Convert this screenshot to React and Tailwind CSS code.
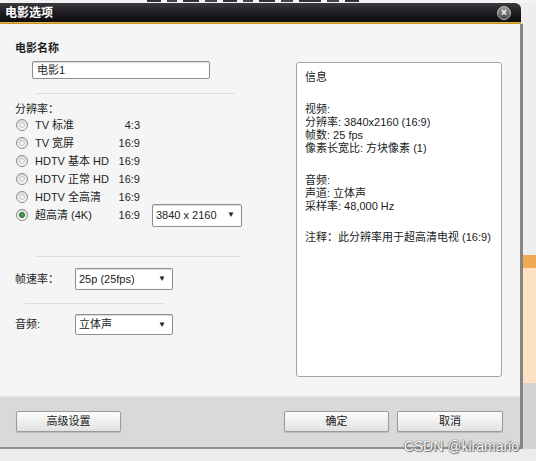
import React from "react";

function Radio({ checked }) {
  return (
    <div className="w-[12px] h-[12px] rounded-full border border-[#8a8a8a] bg-gradient-to-b from-[#dcdcdc] to-[#fafafa] flex items-center justify-center shrink-0">
      <div className={checked ? "w-[6px] h-[6px] rounded-full bg-[#3f9a4a] border border-[#2b6f33]" : "w-[6px] h-[6px] rounded-full bg-[#f0f0f0] border border-[#c8c8c8]"} />
    </div>
  );
}

function Select({ value, className }) {
  return (
    <div className={"flex items-center justify-between bg-white border border-[#8e8e8e] rounded-[2px] shadow-[inset_0_1px_1px_rgba(0,0,0,0.15)] pl-[3px] pr-[6px] text-[11px] text-[#222] " + className}>
      <span>{value}</span>
      <span className="text-[8px] leading-none">▼</span>
    </div>
  );
}

function Btn({ children, className }) {
  return (
    <div className={"h-[21px] flex items-center justify-center rounded-[2px] border border-[#9a9a9a] bg-gradient-to-b from-[#fdfdfd] to-[#e2e2e2] shadow-[0_1px_1px_rgba(0,0,0,0.15)] text-[11px] text-[#222] " + className}>
      {children}
    </div>
  );
}

const rows = [
  ["TV 标准", "4:3"],
  ["TV 宽屏", "16:9"],
  ["HDTV 基本 HD", "16:9"],
  ["HDTV 正常 HD", "16:9"],
  ["HDTV 全高清", "16:9"],
  ["超高清 (4K)", "16:9"],
];

const marks = [
  [147, 14], [166, 10], [182, 16], [204, 12], [222, 14], [243, 10], [258, 16], [281, 12], [300, 22], [328, 12], [346, 14],
];

export default function App() {
  return (
    <div className="relative w-[536px] h-[461px] overflow-hidden bg-[#ededed] flex flex-col [font-family:'Liberation_Sans','Noto_Sans_CJK_SC',sans-serif] text-[#1e1e1e]">
      {/* top clipped strip */}
      <div className="h-[3px] bg-[#f2f2f2] flex items-start shrink-0">
        <div className="flex gap-[6px] ml-[147px] blur-[0.5px]">
          <div className="w-[14px] h-[2px] bg-[#333]" />
          <div className="w-[10px] h-[2px] bg-[#444]" />
          <div className="w-[16px] h-[2px] bg-[#333]" />
          <div className="w-[12px] h-[2px] bg-[#444]" />
          <div className="w-[14px] h-[2px] bg-[#333]" />
          <div className="w-[10px] h-[2px] bg-[#444]" />
          <div className="w-[16px] h-[2px] bg-[#333]" />
          <div className="w-[12px] h-[2px] bg-[#444]" />
          <div className="w-[22px] h-[2px] bg-[#333]" />
          <div className="w-[12px] h-[2px] bg-[#444]" />
          <div className="w-[14px] h-[2px] bg-[#333]" />
        </div>
      </div>
      <div className="flex shrink-0">
        {/* dialog */}
        <div className="w-[523px] flex flex-col">
          <div className="h-[19px] rounded-tr-[6px] bg-gradient-to-b from-[#3a3a3e] via-[#1e1e22] to-[#0e0e10] flex items-center justify-between pl-[5px] pr-[10px] mr-[2px]">
            <span className="text-white text-[12px] font-bold">电影选项</span>
            <div className="w-[14px] h-[14px] rounded-full bg-gradient-to-b from-[#9a9a9a] to-[#4a4a4a] border border-[#bbbbbb] flex items-center justify-center text-white text-[10px] font-bold leading-none">×</div>
          </div>
          <div className="h-[2px] bg-gradient-to-b from-[#f4c24a] to-[#c8901c] mr-[2px]" />
          <div className="flex flex-col border-r-[3px] border-[#858585] shadow-[2px_0_2px_rgba(0,0,0,0.2)]">
            {/* body */}
            <div className="h-[371px] bg-[#f5f5f5] flex">
              <div className="w-[296px] flex flex-col pl-[15px] pt-[17px]">
                <div className="text-[11px] font-bold leading-[14px]">电影名称</div>
                <div className="ml-[17px] mt-[6px] w-[178px] h-[18px] bg-white border border-[#8e8e8e] rounded-[2px] shadow-[inset_0_1px_1px_rgba(0,0,0,0.15)] text-[11px] pl-[4px] flex items-center">电影1</div>
                <div className="ml-[20px] mt-[14px] w-[200px] h-px bg-[#dedede]" />
                <div className="mt-[9px] text-[11px] leading-[13px]">分辨率：</div>
                <div className="flex flex-col">
                  {rows.map(([name, ratio], i) => (
                    <div key={i} className="h-[18px] flex items-center">
                      <div className="ml-[1px]"><Radio checked={i === 5} /></div>
                      <span className="ml-[7px] w-[75px] text-[11px] whitespace-nowrap">{name}</span>
                      <span className="w-[30px] text-right text-[11px]">{ratio}</span>
                      {i === 5 && <Select value="3840 x 2160" className="ml-[12px] w-[90px] h-[23px] shrink-0" />}
                    </div>
                  ))}
                </div>
                <div className="ml-[20px] mt-[32px] w-[205px] h-px bg-[#dedede]" />
                <div className="mt-[11px] h-[22px] flex items-center">
                  <span className="w-[60px] text-[11px]">帧速率：</span>
                  <Select value="25p (25fps)" className="w-[98px] h-[22px]" />
                </div>
                <div className="ml-[10px] mt-[13px] w-[140px] h-px bg-[#dedede]" />
                <div className="mt-[10px] h-[21px] flex items-center">
                  <span className="w-[60px] text-[11px]">音频:</span>
                  <Select value="立体声" className="w-[98px] h-[21px]" />
                </div>
              </div>
              <div className="mt-[38px] w-[206px] h-[315px] bg-white border border-[#a3a3a3] rounded-[3px] pl-[8px] pt-[8px] text-[11px] leading-[13px] text-[#222]">
                <div>信息</div>
                <div className="h-[19px]" />
                <div>视频:</div>
                <div>分辨率: 3840x2160 (16:9)</div>
                <div>帧数: 25 fps</div>
                <div>像素长宽比: 方块像素 (1)</div>
                <div className="h-[19px]" />
                <div>音频:</div>
                <div>声道: 立体声</div>
                <div>采样率: 48,000 Hz</div>
                <div className="h-[18px]" />
                <div>注释：此分辨率用于超高清电视 (16:9)</div>
              </div>
            </div>
            {/* footer */}
            <div className="h-[52px] bg-[#d9d9d9] border-t-2 border-[#ebebeb] flex items-start pt-[14px] pl-[16px] pr-[17px]">
              <Btn className="w-[105px]">高级设置</Btn>
              <div className="flex-1" />
              <Btn className="w-[105px]">确定</Btn>
              <Btn className="w-[106px] ml-[8px]">取消</Btn>
            </div>
          </div>
          <div className="h-[2px] bg-[#8f8f8f]" />
        </div>
        {/* background right of dialog */}
        <div className="flex-1 flex flex-col">
          <div className="h-[252px] bg-[#eeeeee]" />
          <div className="h-[13px] bg-[#f0aa55]" />
          <div className="h-[115px] bg-[#fde2c4]" />
          <div className="h-[66px] bg-[#d4d4d4]" />
        </div>
      </div>
      <div className="flex-1 bg-[#ececec]" />
      <div className="absolute right-[17px] top-[437px] text-[14px] leading-[18px] text-white [text-shadow:0_0_1px_#555,0_0_1px_#555,1px_1px_1px_#777] whitespace-nowrap">CSDN @kiramario</div>
    </div>
  );
}
